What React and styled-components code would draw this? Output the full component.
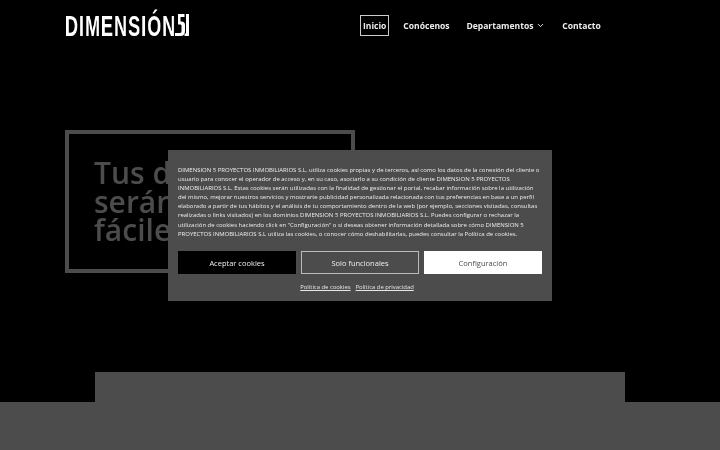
import styled, { createGlobalStyle, css } from 'styled-components'
import { ChevronDown } from 'lucide-react'

const GlobalStyle = createGlobalStyle`
  html, body {
    margin: 0;
    background: #000;
    font-family: "Open Sans", sans-serif;
  }
`

// own layer, so the text is antialiased in grey like the reference
const softText = css`
  will-change: transform;
`

const Page = styled.div`
  position: relative;
  width: 720px;
  height: 450px;
  overflow: hidden;
  background: #000;
  display: flex;
  flex-direction: column;
`

const Header = styled.header`
  height: 50px;
  flex: none;
  display: flex;
  align-items: center;
  padding-left: 65px;
`

const Logo = styled.div`
  width: 124px;
  height: 26px;
  display: flex;
  align-items: flex-end;
  color: #fff;
`

const LogoName = styled.span`
  ${softText}
  font-family: "Liberation Sans", sans-serif;
  font-size: 30px;
  line-height: 25px;
  font-weight: 700;
  letter-spacing: 1.7px;
  display: inline-block;
  transform: scaleX(0.6);
  transform-origin: left bottom;
  width: 110px;
  white-space: nowrap;
`

const LogoFive = styled.svg`
  width: 14px;
  height: 22px;
  margin-bottom: 2px;
  display: block;
`

const Nav = styled.nav`
  ${softText}
  margin-left: 171px;
  display: flex;
  align-items: center;
  gap: 14px;
  font-size: 8.55px;
  font-weight: 700;
  color: #eee;
`

const NavItem = styled.a`
  display: flex;
  align-items: center;
  gap: 3px;
  height: 21px;
  box-sizing: border-box;
  padding: 0 ${p => (p.$active ? '2px' : '0')};
  border: ${p => (p.$active ? '1.5px solid #ccc' : 'none')};
  margin-right: ${p => (p.$active ? '0' : '2.800px')};
`

const Hero = styled.section`
  flex: none;
  box-sizing: border-box;
  width: 290px;
  height: 143px;
  margin: 80px 0 0 65px;
  border: 4px solid #4c4c4c;
  padding: 25px 0 0 25px;
`

const HeroTitle = styled.h1`
  ${softText}
  margin: 0;
  font-size: 30px;
  line-height: 28.5px;
  font-weight: 600;
  color: #4c4c4c;
`

const Band = styled.div`
  flex: none;
  width: 530px;
  height: 30px;
  margin: 99px 0 0 95px;
  background: #4c4c4c;
`

const Footer = styled.div`
  flex: 1;
  background: #4c4c4c;
`

const CookieModal = styled.div`
  position: absolute;
  z-index: 2;
  left: 168px;
  top: 150px;
  width: 384px;
  height: 151px;
  box-sizing: border-box;
  background: #4c4c4c;
  padding: 16px 10px 0;
  color: #ececec;
`

const CookieText = styled.p`
  ${softText}
  margin: 0;
  font-size: 5.97px;
  line-height: 9.1px;
  white-space: nowrap;
`

const ButtonRow = styled.div`
  ${softText}
  margin-top: 12px;
  display: grid;
  grid-template-columns: repeat(3, 118px);
  gap: 5px;
`

const CookieButton = styled.button`
  height: 23px;
  padding: 0;
  box-sizing: border-box;
  font-family: inherit;
  font-size: 7.5px;
  font-weight: 500;
  background: ${p => (p.$variant === 'dark' ? '#000' : p.$variant === 'light' ? '#fff' : 'transparent')};
  color: ${p => (p.$variant === 'light' ? '#4c4c4c' : '#eee')};
  border: ${p => (p.$variant === 'outline' ? '1px solid #bbb' : 'none')};
`

const PolicyLinks = styled.div`
  ${softText}
  margin-top: 9px;
  padding-right: 6px;
  display: flex;
  justify-content: center;
  gap: 5px;
  font-size: 5.9px;
  line-height: 9px;
  color: #e6e6e6;
`

const PolicyLink = styled.a`
  text-decoration: underline;
`

const lines = [
  'DIMENSION 5 PROYECTOS INMOBILIARIOS S.L. utiliza cookies propias y de terceros, así como los datos de la conexión del cliente o',
  'usuario para conocer el operador de acceso y, en su caso, asociarlo a su condición de cliente DIMENSION 5 PROYECTOS',
  'INMOBILIARIOS S.L. Estas cookies serán utilizadas con la finalidad de gestionar el portal, recabar información sobre la utilización',
  'del mismo, mejorar nuestros servicios y mostrarte publicidad personalizada relacionada con tus preferencias en base a un perfil',
  'elaborado a partir de tus hábitos y el análisis de tu comportamiento dentro de la web (por ejemplo, secciones visitadas, consultas',
  'realizadas o links visitados) en los dominios DIMENSION 5 PROYECTOS INMOBILIARIOS S.L. Puedes configurar o rechazar la',
  'utilización de cookies haciendo click en "Configuración" o si deseas obtener información detallada sobre cómo DIMENSION 5',
  'PROYECTOS INMOBILIARIOS S.L utiliza las cookies, o conocer cómo deshabilitarlas, puedes consultar la Política de cookies.',
]

const App = () => {
  return (
    <Page>
      <GlobalStyle />
      <Header>
        <Logo>
          <LogoName>DIMENSIÓN</LogoName>
          <LogoFive viewBox="0 0 14 22">
            <path d="M3 0h6.500v3H5.500v4.500H6.500c2.500 0 3.500 1.500 3.500 3.500v6c0 3-1.500 5-4.500 5H0v-3h5c1 0 1.500-.8 1.500-2v-5c0-1-.5-1.500-1.500-1.500H3z" fill="#fff" />
            <path d="M11 0h3v22H9.500v-2.500h1.500V3z" fill="#fff" />
          </LogoFive>
        </Logo>
        <Nav>
          <NavItem $active>Inicio</NavItem>
          <NavItem>Conócenos</NavItem>
          <NavItem>
            Departamentos <ChevronDown size={9} strokeWidth={2.5} />
          </NavItem>
          <NavItem>Contacto</NavItem>
        </Nav>
      </Header>
      <Hero>
        <HeroTitle>
          Tus deseos
          <br />
          serán
          <br />
          fáciles
        </HeroTitle>
      </Hero>
      <Band />
      <Footer />
      <CookieModal>
        <CookieText>
          {lines.map(line => (
            <span key={line}>
              {line}
              <br />
            </span>
          ))}
        </CookieText>
        <ButtonRow>
          <CookieButton $variant="dark">Aceptar cookies</CookieButton>
          <CookieButton $variant="outline">Solo funcionales</CookieButton>
          <CookieButton $variant="light">Configuración</CookieButton>
        </ButtonRow>
        <PolicyLinks>
          <PolicyLink>Política de cookies</PolicyLink>
          <PolicyLink>Política de privacidad</PolicyLink>
        </PolicyLinks>
      </CookieModal>
    </Page>
  )
}

export default App
